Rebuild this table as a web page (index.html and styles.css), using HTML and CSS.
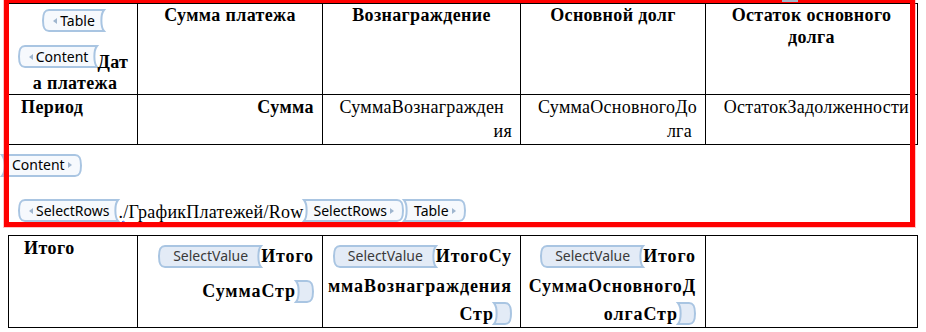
FILE: index.html
```html
<!DOCTYPE html>
<html lang="ru">
<head>
<meta charset="utf-8">
<title>График платежей</title>
<link rel="stylesheet" href="styles.css">
</head>
<body>
<div class="page">
  <div class="frame"></div>
  <div class="topmark"></div>

  <table class="grid main">
    <colgroup><col class="c1"><col class="c2"><col class="c3"><col class="c4"><col class="c5"></colgroup>
    <tr class="head">
      <th class="first">
        <div class="hl hl1">
          <span class="tag open"><svg class="cap" viewBox="0 0 7 23"><path d="M7 1 C2 1 1 5 1 11.5 C1 18 2 22 7 22"/></svg><span class="bd"><i class="tri l"></i>Table</span><svg class="cap" viewBox="0 0 7 23"><path d="M0 1 H7 C3.5 5 3.5 18 7 22 H0"/></svg></span>
        </div>
        <div class="hl hl2">
          <span class="tag open"><svg class="cap" viewBox="0 0 7 23"><path d="M7 1 C2 1 1 5 1 11.5 C1 18 2 22 7 22"/></svg><span class="bd"><i class="tri l"></i>Content</span><svg class="cap" viewBox="0 0 7 23"><path d="M0 1 H7 C3.5 5 3.5 18 7 22 H0"/></svg></span><span class="after-tag">Дат</span>
        </div>
        <div class="hl hl3">а платежа</div>
      </th>
      <th>Сумма платежа</th>
      <th>Вознаграждение</th>
      <th>Основной долг</th>
      <th>Остаток основного долга</th>
    </tr>
    <tr class="data">
      <td class="bold left">Период</td>
      <td class="bold">Сумма</td>
      <td><span class="ln ln-in">СуммаВознагражден</span><span class="ln">ия</span></td>
      <td><span class="ln">СуммаОсновногоДо</span><span class="ln ln-in2">лга</span></td>
      <td>ОстатокЗадолженности</td>
    </tr>
  </table>

  <div class="para p1">
    <span class="tag close"><svg class="cap" viewBox="0 0 7 23"><path d="M7 1 H0 C3.5 5 3.5 18 0 22 H7"/></svg><span class="bd">Content<i class="tri r"></i></span><svg class="cap" viewBox="0 0 7 23"><path d="M0 1 C5 1 6 5 6 11.5 C6 18 5 22 0 22"/></svg></span>
  </div>

  <div class="para p2">
    <span class="tag open"><svg class="cap" viewBox="0 0 7 23"><path d="M7 1 C2 1 1 5 1 11.5 C1 18 2 22 7 22"/></svg><span class="bd"><i class="tri l"></i>SelectRows</span><svg class="cap" viewBox="0 0 7 23"><path d="M0 1 H7 C3.5 5 3.5 18 7 22 H0"/></svg></span><span class="xpath"><span class="squig">./</span>ГрафикПлатежей/Row</span><span class="tag close"><svg class="cap" viewBox="0 0 7 23"><path d="M7 1 H0 C3.5 5 3.5 18 0 22 H7"/></svg><span class="bd">SelectRows<i class="tri r"></i></span><svg class="cap" viewBox="0 0 7 23"><path d="M0 1 C5 1 6 5 6 11.5 C6 18 5 22 0 22"/></svg></span><span class="tag close"><svg class="cap" viewBox="0 0 7 23"><path d="M7 1 H0 C3.5 5 3.5 18 0 22 H7"/></svg><span class="bd">Table<i class="tri r"></i></span><svg class="cap" viewBox="0 0 7 23"><path d="M0 1 C5 1 6 5 6 11.5 C6 18 5 22 0 22"/></svg></span>
  </div>

  <table class="grid totals">
    <colgroup><col class="c1"><col class="c2"><col class="c3"><col class="c4"><col class="c5"></colgroup>
    <tr>
      <td class="tot-label">Итого</td>
      <td class="tot">
        <div class="tl tl1">
          <span class="tag val"><svg class="cap" viewBox="0 0 7 23"><path d="M7 1 C2 1 1 5 1 11.5 C1 18 2 22 7 22"/></svg><span class="bd">SelectValue</span><svg class="cap" viewBox="0 0 7 23"><path d="M0 1 H7 C3.5 5 3.5 18 7 22 H0"/></svg></span><span class="tt">Итого</span>
        </div>
        <div class="tl tl2a">
          <span class="tt">СуммаСтр</span><span class="tag val end"><svg class="cap" viewBox="0 0 7 23"><path d="M7 1 H0 C3.5 5 3.5 18 0 22 H7"/></svg><span class="bd"></span><svg class="cap" viewBox="0 0 7 23"><path d="M0 1 C5 1 6 5 6 11.5 C6 18 5 22 0 22"/></svg></span>
        </div>
      </td>
      <td class="tot">
        <div class="tl tl1">
          <span class="tag val"><svg class="cap" viewBox="0 0 7 23"><path d="M7 1 C2 1 1 5 1 11.5 C1 18 2 22 7 22"/></svg><span class="bd">SelectValue</span><svg class="cap" viewBox="0 0 7 23"><path d="M0 1 H7 C3.5 5 3.5 18 7 22 H0"/></svg></span><span class="tt">ИтогоСу</span>
        </div>
        <div class="tl tl2"><span class="tt">ммаВознаграждения</span></div>
        <div class="tl tl3">
          <span class="tt">Стр</span><span class="tag val end"><svg class="cap" viewBox="0 0 7 23"><path d="M7 1 H0 C3.5 5 3.5 18 0 22 H7"/></svg><span class="bd"></span><svg class="cap" viewBox="0 0 7 23"><path d="M0 1 C5 1 6 5 6 11.5 C6 18 5 22 0 22"/></svg></span>
        </div>
      </td>
      <td class="tot tot4">
        <div class="tl tl1">
          <span class="tag val"><svg class="cap" viewBox="0 0 7 23"><path d="M7 1 C2 1 1 5 1 11.5 C1 18 2 22 7 22"/></svg><span class="bd">SelectValue</span><svg class="cap" viewBox="0 0 7 23"><path d="M0 1 H7 C3.5 5 3.5 18 7 22 H0"/></svg></span><span class="tt">Итого</span>
        </div>
        <div class="tl tl2"><span class="tt">СуммаОсновногоД</span></div>
        <div class="tl tl3">
          <span class="tt">олгаСтр</span><span class="tag val end"><svg class="cap" viewBox="0 0 7 23"><path d="M7 1 H0 C3.5 5 3.5 18 0 22 H7"/></svg><span class="bd"></span><svg class="cap" viewBox="0 0 7 23"><path d="M0 1 C5 1 6 5 6 11.5 C6 18 5 22 0 22"/></svg></span>
        </div>
      </td>
      <td></td>
    </tr>
  </table>
</div>
</body>
</html>
```

FILE: styles.css
```css
* { box-sizing: border-box; }
html, body { margin: 0; padding: 0; background: #fff; }
body {
  font-family: "Liberation Serif", "Times New Roman", serif;
  color: #000;
}
.page {
  position: relative;
  width: 926px;
  height: 332px;
  overflow: hidden;
  padding-top: 3px;
}

/* red highlight frame over the upper block */
.frame {
  position: absolute;
  left: 4px;
  top: -2px;
  width: 911px;
  height: 229px;
  border: 5px solid #ff0000;
  box-shadow: 0 0 0 1px rgba(255, 90, 90, 0.35);
  pointer-events: none;
  z-index: 3;
}
.topmark {
  position: absolute;
  left: 782px;
  top: 0;
  width: 16px;
  height: 2px;
  background: #a7b6c9;
  z-index: 4;
}

/* tables */
table.grid {
  border-collapse: collapse;
  table-layout: fixed;
  width: 909px;
  margin-left: 8px;
}
.grid th, .grid td {
  border: 1px solid #000;
  padding: 0;
  vertical-align: top;
  font-size: 18px;
}
col.c1 { width: 129px; }
col.c2 { width: 185px; }
col.c3 { width: 198px; }
col.c4 { width: 185px; }
col.c5 { width: 212px; }

.head th {
  height: 91px;
  font-weight: bold;
  line-height: 22px;
  text-align: center;
  letter-spacing: 0.35px;
  padding: 0 7px;
}
.head th.first { padding: 0; }
.hl { display: flex; justify-content: center; white-space: nowrap; }
.hl1 { height: 37px; align-items: flex-start; padding-top: 5px; }
.hl2 { height: 30px; align-items: flex-end; padding-bottom: 3px; }
.hl3 { height: 23px; align-items: center; padding-left: 4px; }
.after-tag { line-height: 20px; margin-bottom: -4px; }

.data td {
  height: 50px;
  line-height: 24px;
  text-align: right;
  padding-right: 8px;
  letter-spacing: 0.25px;
  white-space: nowrap;
}
.data td.bold { font-weight: bold; letter-spacing: 0.4px; }
.data td.left { text-align: left; padding-left: 12px; }
.ln { display: block; }
.ln-in { margin-right: 8px; }
.ln-in2 { margin-right: 5px; }

/* paragraphs between tables */
.para { display: flex; white-space: nowrap; font-size: 18px; }
.p1 { height: 40px; align-items: center; padding-left: 2px; }
.p2 { height: 49px; align-items: flex-end; padding-left: 18px; padding-bottom: 12px; }
.xpath { line-height: 20px; letter-spacing: 0.25px; }
.squig {
  text-decoration: underline wavy #3a5ee8;
  text-decoration-thickness: 1px;
  text-underline-offset: 2px;
}

/* totals table */
.totals { margin-top: 1px; }
.totals td { height: 91px; }
.tot-label {
  font-weight: bold;
  line-height: 22px;
  padding: 1px 0 0 15px !important;
  letter-spacing: 0.5px;
}
.tot { padding: 4px 8px 0 0 !important; }
.tot4 { padding-right: 9px !important; }
.tl { display: flex; justify-content: flex-end; align-items: center; white-space: nowrap; }
.tl1 { height: 32px; }
.tl2a { height: 38px; }
.tl2 { height: 28px; }
.tl3 { height: 27px; }
.tt { font-weight: bold; line-height: 22px; letter-spacing: 0.9px; }

/* content-control tags */
.tag {
  display: inline-flex;
  align-items: stretch;
  height: 23px;
  flex: none;
  font-family: "Noto Sans", "DejaVu Sans", sans-serif;
  font-size: 14px;
  font-weight: normal;
  letter-spacing: 0;
  line-height: 16px;
  color: #000;
}
.tag .cap {
  display: block;
  width: 7px;
  height: 23px;
  overflow: visible;
  flex: none;
}
.tag .cap path {
  fill: #f6f9fd;
  stroke: #a9c5e2;
  stroke-width: 2;
}
.tag .bd {
  display: flex;
  align-items: center;
  background: #f6f9fd;
  border-top: 2px solid #a9c5e2;
  border-bottom: 2px solid #a9c5e2;
  padding: 0 2px 0 3px;
}
.tag.val .cap path { fill: #e3ebf6; }
.tag.val .bd {
  background: #e3ebf6;
  color: #3a3a3a;
  padding: 0 6px 0 8px;
}
.tag.val.end .bd { padding: 0 2px; }

.tri {
  display: inline-block;
  width: 0;
  height: 0;
  border-top: 3px solid transparent;
  border-bottom: 3px solid transparent;
}
.tri.l { border-right: 4px solid #9fb6cf; margin: 0 3px 0 1px; }
.tri.r { border-left: 4px solid #9fb6cf; margin: 0 1px 0 3px; }
```
